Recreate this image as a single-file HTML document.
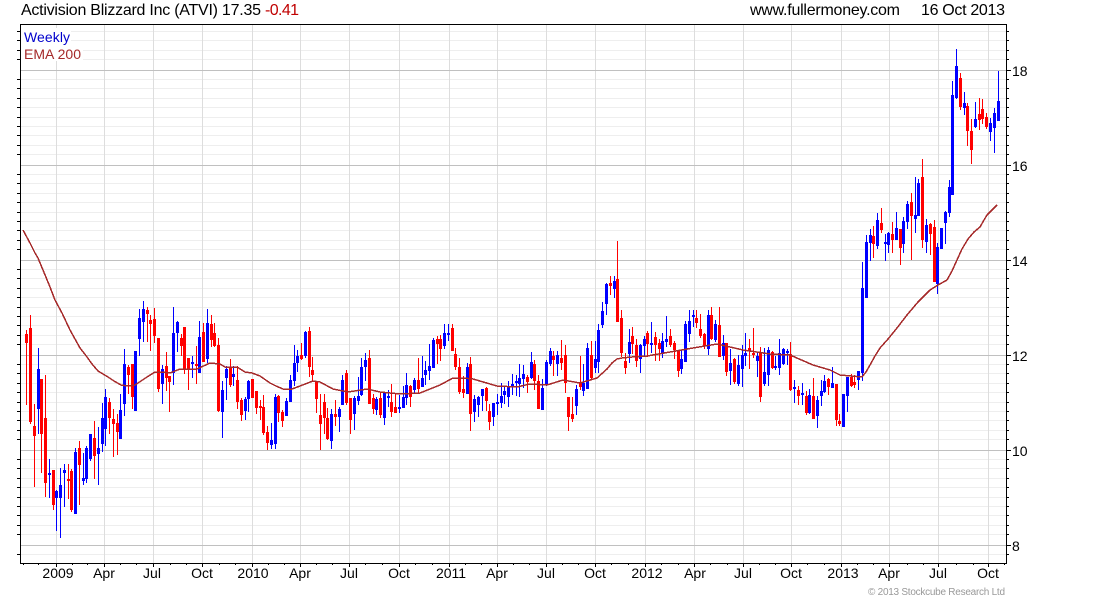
<!DOCTYPE html>
<html lang="en"><head><meta charset="utf-8"><title>Activision Blizzard Inc (ATVI)</title>
<style>
html,body{margin:0;padding:0;background:#fff;width:1100px;height:600px;overflow:hidden}
svg{display:block}
text{font-family:"Liberation Sans",Arial,sans-serif;fill:#000}
</style></head><body>
<svg width="1100" height="600" viewBox="0 0 1100 600" xmlns="http://www.w3.org/2000/svg">
<rect width="1100" height="600" fill="#fff"/>
<g shape-rendering="crispEdges" fill="none">
<path stroke="#eeeeee" d="M20 31.5H1006M20 40.5H1006M20 50.5H1006M20 59.5H1006M20 79.5H1006M20 88.5H1006M20 98.5H1006M20 107.5H1006M20 117.5H1006M20 126.5H1006M20 135.5H1006M20 145.5H1006M20 154.5H1006M20 174.5H1006M20 183.5H1006M20 193.5H1006M20 202.5H1006M20 212.5H1006M20 221.5H1006M20 230.5H1006M20 240.5H1006M20 249.5H1006M20 269.5H1006M20 278.5H1006M20 288.5H1006M20 297.5H1006M20 307.5H1006M20 316.5H1006M20 325.5H1006M20 335.5H1006M20 344.5H1006M20 364.5H1006M20 373.5H1006M20 383.5H1006M20 392.5H1006M20 402.5H1006M20 411.5H1006M20 420.5H1006M20 430.5H1006M20 439.5H1006M20 459.5H1006M20 468.5H1006M20 478.5H1006M20 487.5H1006M20 497.5H1006M20 506.5H1006M20 515.5H1006M20 525.5H1006M20 534.5H1006M20 554.5H1006"/>
<path stroke="#dddddd" d="M56.5 24V563M104.5 24V563M153.5 24V563M202.5 24V563M252.5 24V563M300.5 24V563M349.5 24V563M399.5 24V563M449.5 24V563M497.5 24V563M546.5 24V563M595.5 24V563M645.5 24V563M694.5 24V563M743.5 24V563M791.5 24V563M841.5 24V563M889.5 24V563M938.5 24V563M988.5 24V563"/>
<path stroke="#c0c0c0" d="M20 70.5H1006M20 165.5H1006M20 260.5H1006M20 355.5H1006M20 450.5H1006M20 545.5H1006"/>
<rect x="21" y="28" width="50" height="16" fill="#fff"/>
<rect x="21" y="44" width="62" height="17" fill="#fff"/>
<path stroke="#ff0000" d="M26.5 330V405M30.5 315V424M34.5 404V487M41.5 379V473M45.5 375V497M53.5 470V510M68.5 464V499M71.5 469V512M79.5 441V505M94.5 421V479M109.5 398V434M113.5 409V457M117.5 414V455M128.5 365V394M132.5 364V409M147.5 307V342M150.5 315V351M154.5 308V343M158.5 338V392M166.5 352V391M169.5 376V412M181.5 334V356M184.5 327V374M188.5 358V390M196.5 346V384M203.5 323V362M211.5 315V347M214.5 323V347M218.5 338V412M230.5 359V387M237.5 366V409M241.5 398V421M252.5 379V398M256.5 391V414M260.5 400V420M263.5 395V435M267.5 426V450M278.5 395V422M282.5 410V427M301.5 343V360M309.5 327V377M312.5 357V382M316.5 381V413M320.5 394V450M324.5 394V434M327.5 408V440M335.5 400V426M346.5 370V405M350.5 398V434M369.5 350V404M373.5 394V414M380.5 393V418M391.5 384V417M395.5 394V413M410.5 385V407M418.5 358V394M437.5 336V364M440.5 335V361M452.5 324V351M455.5 348V370M459.5 358V394M463.5 376V398M470.5 357V431M486.5 387V411M489.5 404V430M527.5 375V393M534.5 360V390M538.5 375V409M553.5 351V376M561.5 340V370M565.5 345V393M568.5 397V431M572.5 397V422M580.5 356V390M591.5 341V380M610.5 276V295M617.5 241V322M621.5 310V357M625.5 353V374M632.5 327V354M636.5 339V367M647.5 331V357M655.5 332V361M659.5 339V361M670.5 329V347M674.5 341V359M678.5 350V377M696.5 310V328M700.5 314V338M704.5 333V349M711.5 307V340M719.5 307V357M726.5 343V376M734.5 358V384M749.5 339V369M753.5 328V358M760.5 347V402M772.5 351V369M790.5 342V391M798.5 386V405M806.5 391V415M813.5 378V419M828.5 378V395M836.5 384V426M839.5 414V426M851.5 374V387M854.5 375V388M873.5 226V258M881.5 208V233M892.5 222V253M900.5 229V265M911.5 193V260M922.5 159V248M930.5 223V255M934.5 220V282M960.5 73V110M967.5 103V146M971.5 119V164M979.5 98V130M982.5 99V124M986.5 113V129"/>
<path stroke="#ff0000" stroke-width="3" d="M26.5 334V343M30.5 328V422M34.5 426V436M41.5 379V434M45.5 418V483M53.5 470V505M68.5 479V481M71.5 471V510M79.5 448V465M94.5 438V456M109.5 402V418M113.5 419V424M117.5 423V432M128.5 367V375M132.5 364V397M147.5 310V314M150.5 320V324M154.5 319V336M158.5 338V389M166.5 366V378M169.5 376V382M181.5 338V346M184.5 327V369M188.5 358V369M196.5 364V366M203.5 332V362M211.5 324V340M214.5 333V346M218.5 345V411M230.5 367V385M237.5 380V402M241.5 400V415M252.5 379V398M256.5 391V408M260.5 406V408M263.5 407V433M267.5 432V443M278.5 396V413M282.5 412V421M301.5 355V359M309.5 331V367M312.5 370V375M316.5 382V399M320.5 415V424M324.5 402V418M327.5 418V439M335.5 414V417M346.5 373V403M350.5 398V420M369.5 358V404M373.5 398V409M380.5 398V415M391.5 402V412M395.5 407V413M410.5 386V397M418.5 380V389M437.5 339V344M440.5 339V349M452.5 328V351M455.5 354V367M459.5 367V392M463.5 389V393M470.5 364V414M486.5 388V401M489.5 411V422M527.5 377V382M534.5 364V381M538.5 381V409M553.5 356V360M561.5 358V363M565.5 355V383M568.5 397V417M572.5 414V419M580.5 383V387M591.5 355V378M610.5 283V286M617.5 279V322M621.5 318V353M625.5 361V368M632.5 336V344M636.5 345V361M647.5 333V344M655.5 337V345M659.5 343V349M670.5 336V345M674.5 343V350M678.5 350V371M696.5 318V323M700.5 329V336M704.5 334V346M711.5 315V339M719.5 325V357M726.5 343V372M734.5 359V382M749.5 348V351M753.5 353V355M760.5 353V397M772.5 352V368M790.5 354V390M798.5 390V396M806.5 396V413M813.5 396V419M828.5 379V387M836.5 384V420M839.5 421V424M851.5 377V386M854.5 382V385M873.5 236V244M881.5 223V230M892.5 234V240M900.5 229V248M911.5 202V216M922.5 177V240M930.5 224V234M934.5 227V282M960.5 78V107M967.5 106V131M971.5 131V150M979.5 114V120M982.5 109V119M986.5 117V127"/>
<path stroke="#0000ff" d="M38.5 348V434M49.5 459V498M56.5 490V531M60.5 468V538M64.5 464V507M75.5 448V514M83.5 453V485M86.5 446V483M90.5 434V461M98.5 427V485M102.5 403V452M105.5 389V446M120.5 394V439M124.5 349V416M135.5 351V411M139.5 309V356M143.5 301V342M162.5 365V404M173.5 307V385M177.5 321V352M192.5 356V378M199.5 321V373M207.5 309V363M222.5 381V438M226.5 366V400M233.5 366V386M245.5 397V420M248.5 380V412M271.5 423V449M275.5 394V449M286.5 398V416M290.5 375V402M294.5 345V386M297.5 350V372M305.5 331V358M331.5 409V449M339.5 407V432M342.5 375V405M354.5 396V430M358.5 377V405M361.5 358V396M365.5 353V381M376.5 397V415M384.5 392V425M388.5 390V407M399.5 395V413M403.5 386V408M406.5 373V405M414.5 378V394M422.5 356V387M425.5 361V385M429.5 344V380M433.5 338V368M444.5 324V349M448.5 324V341M467.5 363V394M474.5 395V422M478.5 396V417M482.5 389V411M493.5 403V426M497.5 394V415M501.5 383V408M504.5 387V404M508.5 381V407M512.5 374V395M516.5 375V396M519.5 364V397M523.5 365V388M531.5 352V379M542.5 379V410M546.5 360V386M550.5 348V366M557.5 351V376M576.5 385V415M583.5 364V396M587.5 343V389M595.5 341V373M598.5 324V373M602.5 302V328M606.5 283V315M614.5 276V298M629.5 329V363M640.5 344V373M644.5 336V357M651.5 322V353M662.5 333V358M666.5 316V347M681.5 350V374M685.5 321V362M689.5 310V342M693.5 310V327M708.5 310V355M715.5 320V342M723.5 335V360M730.5 349V385M738.5 355V386M742.5 345V387M745.5 333V366M757.5 353V377M764.5 348V386M768.5 347V386M775.5 356V370M779.5 339V375M783.5 348V365M787.5 349V365M794.5 380V403M802.5 383V405M809.5 389V414M817.5 396V428M821.5 380V406M824.5 375V393M832.5 367V388M843.5 394V427M847.5 377V412M858.5 371V390M862.5 262V381M866.5 235V298M870.5 229V261M877.5 213V249M885.5 234V261M888.5 232V253M896.5 212V240M903.5 217V253M907.5 201V229M915.5 177V233M918.5 179V216M926.5 219V253M937.5 243V294M941.5 228V249M945.5 211V244M949.5 180V217M952.5 81V195M956.5 49V99M964.5 92V115M975.5 102V128M990.5 118V141M994.5 108V153M998.5 71V121"/>
<path stroke="#0000ff" stroke-width="3" d="M38.5 369V409M49.5 473V475M56.5 491V498M60.5 485V498M64.5 470V473M75.5 452V514M83.5 478V481M86.5 448V479M90.5 434V459M98.5 448V454M102.5 418V444M105.5 397V429M120.5 410V439M124.5 364V404M135.5 351V411M139.5 318V339M143.5 309V322M162.5 369V384M173.5 333V373M177.5 322V333M192.5 362V364M199.5 337V373M207.5 323V359M222.5 390V412M226.5 369V378M233.5 374V377M245.5 399V411M248.5 381V399M271.5 440V445M275.5 397V444M286.5 401V416M290.5 380V402M294.5 363V381M297.5 356V363M305.5 332V356M331.5 414V441M339.5 409V417M342.5 380V405M354.5 398V414M358.5 396V401M361.5 367V395M365.5 360V367M376.5 399V410M384.5 392V418M388.5 396V398M399.5 407V409M403.5 397V408M406.5 385V398M414.5 380V390M422.5 378V387M425.5 370V375M429.5 366V371M433.5 340V368M444.5 333V346M448.5 333V335M467.5 367V394M474.5 399V412M478.5 397V405M482.5 389V396M493.5 403V417M497.5 402V404M501.5 396V403M504.5 391V395M508.5 387V397M512.5 384V387M516.5 381V383M519.5 378V384M523.5 374V379M531.5 362V378M542.5 388V410M546.5 362V385M550.5 351V364M557.5 355V364M576.5 389V406M583.5 383V391M587.5 348V389M595.5 359V368M598.5 330V362M602.5 311V325M606.5 284V304M614.5 281V289M629.5 342V354M640.5 345V359M644.5 339V346M651.5 343V345M662.5 341V354M666.5 339V342M681.5 359V369M685.5 324V362M689.5 321V334M693.5 315V317M708.5 315V349M715.5 324V340M723.5 343V356M730.5 363V371M738.5 365V384M742.5 355V369M745.5 353V356M757.5 356V361M764.5 372V384M768.5 350V375M775.5 366V368M779.5 353V368M783.5 349V364M787.5 351V353M794.5 387V389M802.5 393V395M809.5 395V413M817.5 400V416M821.5 391V396M824.5 381V392M832.5 383V388M843.5 394V427M847.5 377V396M858.5 371V380M862.5 288V373M866.5 242V298M870.5 235V243M877.5 220V246M885.5 242V244M888.5 233V245M896.5 228V240M903.5 221V244M907.5 204V222M915.5 215V219M918.5 183V216M926.5 225V242M937.5 247V284M941.5 228V249M945.5 212V223M949.5 187V213M952.5 95V195M956.5 66V98M964.5 103V108M975.5 119V127M990.5 123V132M994.5 113V128M998.5 101V121"/>
<polyline stroke="#a52a2a" stroke-width="1.5" stroke-linejoin="round" points="23,230 30,243 35,253 38,258 43,270 50,287 55,300 62,313 70,330 80,348 84,353 87,357 92,364 98,371 103,374 108,377 114,381 121,385 128,386 135,385 141,381 147,377 155,372 162,372 170,373 180,369 197,369 210,363 220,364 225,367 237,367 245,372 252,373 260,376 270,383 276,386 283,389 292,389 300,386 313,381 320,382 333,389 348,392 367,389 380,392 400,394 420,393 430,389 440,385 453,378 463,378 473,379 497,386 517,387 530,384 547,385 563,380 580,383 597,378 607,369 612,363 617,359 622,358 632,357 647,356 670,352 693,348 717,344 730,347 743,350 770,354 790,355 813,365 830,370 840,375 851,376 862,377 866,372 870,365 875,356 880,348 888,339 897,328 907,315 918,302 924,296 930,290 938,285 947,280 952,271 957,260 962,249 968,239 974,232 980,227 984,220 987,215 992,210 997,205"/>
<path stroke="#000" d="M20.5 24V564M1006.5 24V564M20 24.5H1007M20 563.5H1007"/>
<path stroke="#000" d="M17 31.5H20M17 40.5H20M17 50.5H20M17 59.5H20M17 79.5H20M17 88.5H20M17 98.5H20M17 107.5H20M17 117.5H20M17 126.5H20M17 135.5H20M17 145.5H20M17 154.5H20M17 174.5H20M17 183.5H20M17 193.5H20M17 202.5H20M17 212.5H20M17 221.5H20M17 230.5H20M17 240.5H20M17 249.5H20M17 269.5H20M17 278.5H20M17 288.5H20M17 297.5H20M17 307.5H20M17 316.5H20M17 325.5H20M17 335.5H20M17 344.5H20M17 364.5H20M17 373.5H20M17 383.5H20M17 392.5H20M17 402.5H20M17 411.5H20M17 420.5H20M17 430.5H20M17 439.5H20M17 459.5H20M17 468.5H20M17 478.5H20M17 487.5H20M17 497.5H20M17 506.5H20M17 515.5H20M17 525.5H20M17 534.5H20M17 554.5H20"/>
<path stroke="#000" d="M1007 31.5H1009M1007 40.5H1009M1007 50.5H1009M1007 59.5H1009M1007 79.5H1009M1007 88.5H1009M1007 98.5H1009M1007 107.5H1009M1007 117.5H1009M1007 126.5H1009M1007 135.5H1009M1007 145.5H1009M1007 154.5H1009M1007 174.5H1009M1007 183.5H1009M1007 193.5H1009M1007 202.5H1009M1007 212.5H1009M1007 221.5H1009M1007 230.5H1009M1007 240.5H1009M1007 249.5H1009M1007 269.5H1009M1007 278.5H1009M1007 288.5H1009M1007 297.5H1009M1007 307.5H1009M1007 316.5H1009M1007 325.5H1009M1007 335.5H1009M1007 344.5H1009M1007 364.5H1009M1007 373.5H1009M1007 383.5H1009M1007 392.5H1009M1007 402.5H1009M1007 411.5H1009M1007 420.5H1009M1007 430.5H1009M1007 439.5H1009M1007 459.5H1009M1007 468.5H1009M1007 478.5H1009M1007 487.5H1009M1007 497.5H1009M1007 506.5H1009M1007 515.5H1009M1007 525.5H1009M1007 534.5H1009M1007 554.5H1009M1007 70.5H1011M1007 165.5H1011M1007 260.5H1011M1007 355.5H1011M1007 450.5H1011M1007 545.5H1011"/>
<path stroke="#000" d="M56.5 564V567M104.5 564V567M153.5 564V567M202.5 564V567M252.5 564V567M300.5 564V567M349.5 564V567M399.5 564V567M449.5 564V567M497.5 564V567M546.5 564V567M595.5 564V567M645.5 564V567M694.5 564V567M743.5 564V567M791.5 564V567M841.5 564V567M889.5 564V567M938.5 564V567M988.5 564V567M23.5 564V565M38.5 564V565M72.5 564V565M87.5 564V565M120.5 564V565M136.5 564V565M170.5 564V565M186.5 564V565M219.5 564V565M235.5 564V565M268.5 564V565M284.5 564V565M316.5 564V565M332.5 564V565M365.5 564V565M382.5 564V565M415.5 564V565M432.5 564V565M465.5 564V565M481.5 564V565M513.5 564V565M529.5 564V565M562.5 564V565M578.5 564V565M611.5 564V565M628.5 564V565M661.5 564V565M678.5 564V565M710.5 564V565M727.5 564V565M759.5 564V565M775.5 564V565M807.5 564V565M824.5 564V565M857.5 564V565M873.5 564V565M907.5 564V565M923.5 564V565M956.5 564V565M973.5 564V565M1004.5 564V565"/>
</g>
<text x="21" y="15" font-size="16" textLength="240" lengthAdjust="spacing">Activision Blizzard Inc (ATVI) 17.35</text>
<text x="265" y="15" font-size="16" textLength="34" lengthAdjust="spacing" style="fill:#c00000">-0.41</text>
<text x="750" y="15" font-size="16" textLength="150" lengthAdjust="spacing">www.fullermoney.com</text>
<text x="921" y="15" font-size="16" textLength="84" lengthAdjust="spacing">16 Oct 2013</text>
<text x="24" y="42" font-size="14" textLength="46" lengthAdjust="spacing" style="fill:#0000cc">Weekly</text>
<text x="24" y="59" font-size="14" textLength="57" lengthAdjust="spacing" style="fill:#a52a2a">EMA 200</text>
<g font-size="14">
<text x="1012" y="76">18</text>
<text x="1012" y="171">16</text>
<text x="1012" y="266">14</text>
<text x="1012" y="361">12</text>
<text x="1012" y="456">10</text>
<text x="1012" y="551">8</text>
</g>
<g font-size="14" text-anchor="middle">
<text x="58" y="578">2009</text>
<text x="104" y="578">Apr</text>
<text x="152" y="578">Jul</text>
<text x="202" y="578">Oct</text>
<text x="253" y="578">2010</text>
<text x="300" y="578">Apr</text>
<text x="349" y="578">Jul</text>
<text x="399" y="578">Oct</text>
<text x="451" y="578">2011</text>
<text x="497" y="578">Apr</text>
<text x="546" y="578">Jul</text>
<text x="595" y="578">Oct</text>
<text x="647" y="578">2012</text>
<text x="695" y="578">Apr</text>
<text x="743" y="578">Jul</text>
<text x="791" y="578">Oct</text>
<text x="843" y="578">2013</text>
<text x="889" y="578">Apr</text>
<text x="938" y="578">Jul</text>
<text x="988" y="578">Oct</text>
</g>
<text x="868" y="595" font-size="10" textLength="137" lengthAdjust="spacing" style="fill:#999">© 2013 Stockcube Research Ltd</text>
</svg>
</body></html>
